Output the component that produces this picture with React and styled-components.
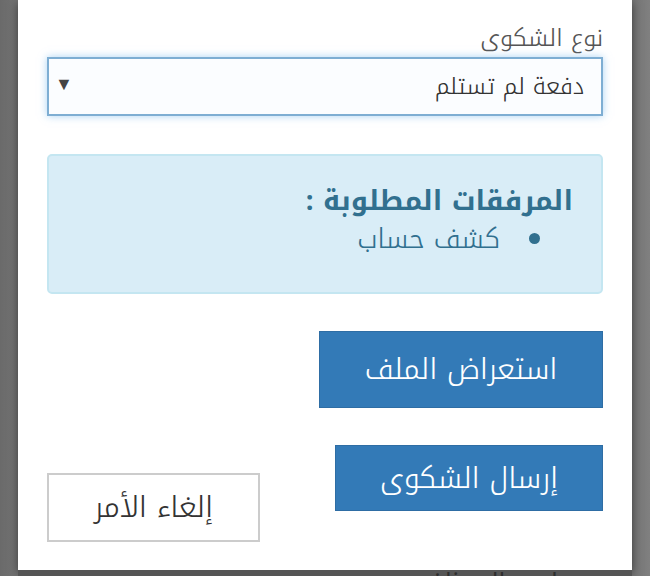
import React from "react";
import styled, { createGlobalStyle } from "styled-components";

const Global = createGlobalStyle`
  html, body {
    margin: 0;
    padding: 0;
    background: #717171;
    overflow: hidden;
  }
  * { box-sizing: border-box; }
`;

const Screen = styled.div`
  width: 650px;
  height: 576px;
  display: flex;
  flex-direction: column;
  padding: 0 18px;
  background: linear-gradient(to right, #6a6a6a 0, #747474 18px, #747474 632px, #808080 650px);
  font-family: "Noto Kufi Arabic", "Noto Sans Arabic", "DejaVu Sans", sans-serif;
  direction: rtl;
`;

const Modal = styled.div`
  height: 570px;
  flex: none;
  background: #fff;
  box-shadow: 0 3px 9px rgba(0, 0, 0, 0.5);
  padding: 22px 29px 0;
  display: flex;
  flex-direction: column;
`;

const Behind = styled.div`
  flex: 1;
  overflow: hidden;
  background: #555;
  padding-right: 74px;
  color: #2e2e2e;
  font-size: 24px;
  line-height: 24px;
`;

const Label = styled.label`
  display: block;
  color: #555;
  font-size: 24px;
  font-weight: 300;
  line-height: 32px;
  margin-bottom: 3px;
`;

const Select = styled.div`
  height: 59px;
  border: 2px solid #7eaed3;
  background: #fbfdff;
  box-shadow: 0 0 8px rgba(102, 175, 233, 0.55);
  display: flex;
  align-items: center;
  justify-content: space-between;
  padding: 0 17px 0 6px;
  color: #333;
  font-size: 23px;
  font-weight: 300;
`;

const Arrow = styled.span`
  font-family: "DejaVu Sans", sans-serif;
  font-size: 18px;
  color: #444;
  margin-top: -6px;
`;

const Alert = styled.div`
  margin-top: 38px;
  height: 140px;
  background: #d9edf7;
  border: 2px solid #c4e6f1;
  border-radius: 5px;
  padding: 27px 28px 0;
  color: #31708f;
`;

const AlertTitle = styled.div`
  font-size: 27.5px;
  font-weight: bold;
  line-height: 36px;
`;

const Item = styled.div`
  display: flex;
  align-items: center;
  gap: 29px;
  padding-right: 33px;
  margin-top: 4px;
  font-size: 27px;
  font-weight: 300;
  line-height: 32px;
`;

const Dot = styled.span`
  width: 11px;
  height: 11px;
  border-radius: 50%;
  background: #31708f;
  flex: none;
  margin-top: -2px;
`;

const Button = styled.button`
  font-family: inherit;
  font-size: 29px;
  font-weight: 300;
  cursor: pointer;
  width: ${(p) => p.w}px;
  height: ${(p) => p.h}px;
  color: ${(p) => (p.primary ? "#fff" : "#333")};
  background: ${(p) => (p.primary ? "#337ab7" : "#fff")};
  border: ${(p) => (p.primary ? "1px solid #2e6da4" : "2px solid #ccc")};
  border-radius: 0;
  padding: 0;
`;

const Row = styled.div`
  display: flex;
  justify-content: space-between;
  align-items: flex-start;
  margin-top: ${(p) => p.top}px;
`;

const Cancel = styled(Button)`
  margin-top: 28px;
`;

export default function App() {
  return (
    <>
      <Global />
      <Screen>
        <Modal>
          <Label>نوع الشكوى</Label>
          <Select>
            <span>دفعة لم تستلم</span>
            <Arrow>▼</Arrow>
          </Select>
          <Alert>
            <AlertTitle>المرفقات المطلوبة :</AlertTitle>
            <Item>
              <Dot />
              <span>كشف حساب</span>
            </Item>
          </Alert>
          <Row top={37}>
            <Button primary w={284} h={77}>استعراض الملف</Button>
          </Row>
          <Row top={37}>
            <Button primary w={268} h={66}>إرسال الشكوى</Button>
            <Cancel w={213} h={69}>إلغاء الأمر</Cancel>
          </Row>
        </Modal>
        <Behind>اسم الموظف</Behind>
      </Screen>
    </>
  );
}
